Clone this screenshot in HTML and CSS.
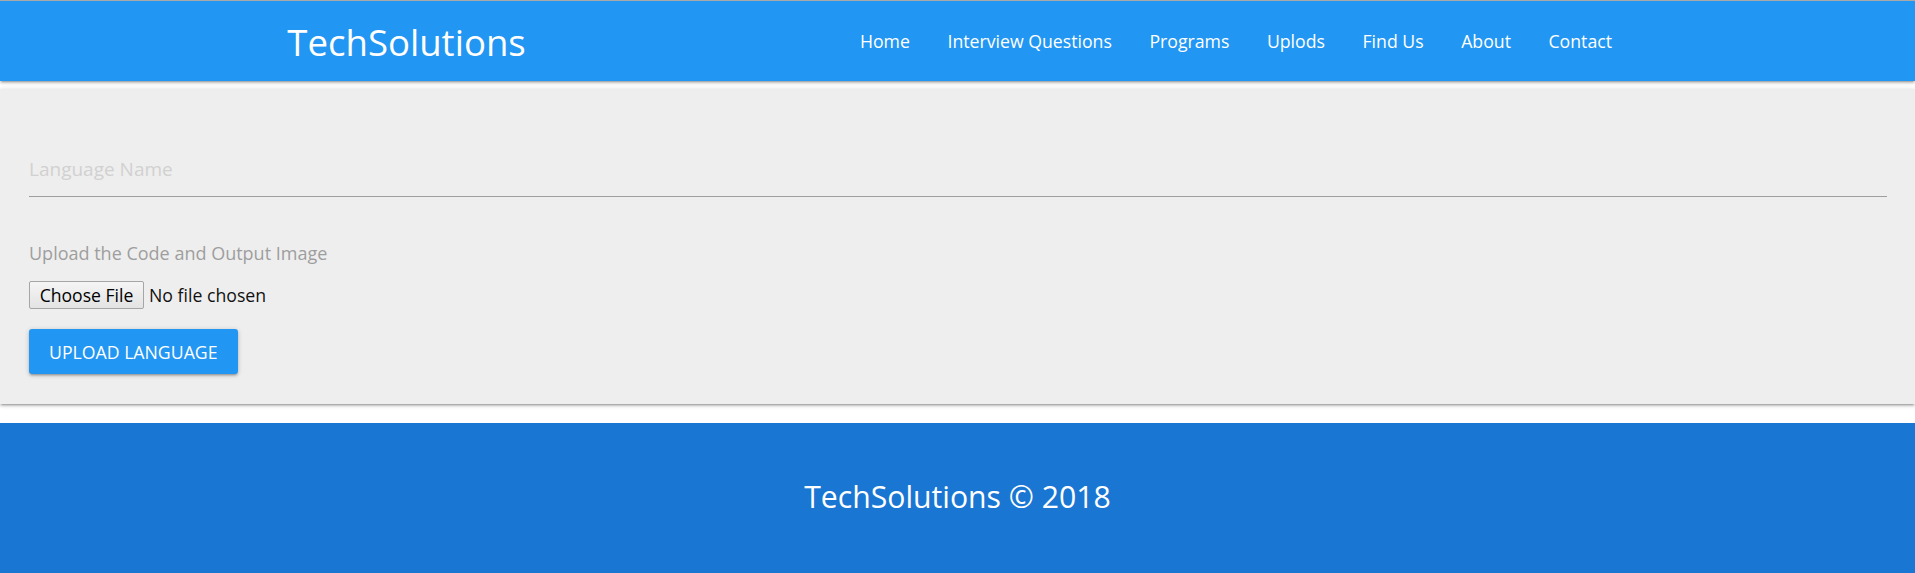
FILE: index.html
```html
<!DOCTYPE html>
<html lang="en">
<head>
<meta charset="utf-8">
<title>TechSolutions - Upload Language</title>
<link rel="stylesheet" href="styles.css">
</head>
<body>
<header class="navbar">
  <div class="container nav-inner">
    <a class="brand" href="#">TechSolutions</a>
    <ul class="nav-links">
      <li><a href="#">Home</a></li>
      <li><a href="#">Interview Questions</a></li>
      <li><a href="#">Programs</a></li>
      <li><a href="#">Uplods</a></li>
      <li><a href="#">Find Us</a></li>
      <li><a href="#">About</a></li>
      <li><a href="#">Contact</a></li>
    </ul>
  </div>
</header>

<main class="page">
  <form class="card" action="#">
    <input class="text-input" type="text" placeholder="Language Name">
    <p class="field-label">Upload the Code and Output Image</p>
    <label class="file-picker">
      <input class="file-hidden" type="file">
      <span class="file-btn">Choose File</span>
      <span class="file-status">No file chosen</span>
    </label>
    <div class="actions">
      <button class="btn" type="button">Upload Language</button>
    </div>
  </form>
</main>

<footer class="footer">
  <p class="footer-text">TechSolutions © 2018</p>
</footer>
</body>
</html>
```

FILE: styles.css
```css
* {
  box-sizing: border-box;
}

html, body {
  margin: 0;
  padding: 0;
}

body {
  background: #ffffff;
  font-family: "Open Sans", "Noto Sans", "DejaVu Sans", sans-serif;
  color: #222;
}

/* Header */
.navbar {
  border-top: 1px solid #a9a9a9;
  height: 81px;
  background: #2196f3;
  box-shadow: 0 2px 2px 0 rgba(0,0,0,0.14), 0 3px 1px -2px rgba(0,0,0,0.12), 0 1px 5px 0 rgba(0,0,0,0.2);
  position: relative;
  z-index: 2;
}

.container {
  width: 70%;
  margin: 0 auto;
}

.nav-inner {
  height: 80px;
  display: flex;
  align-items: center;
  justify-content: space-between;
}

.brand {
  color: #ffffff;
  text-decoration: none;
  font-size: 36.6px;
  line-height: 1;
  padding-top: 2px;
}

.nav-links {
  list-style: none;
  margin: 0 -3px 0 0;
  padding: 0;
  display: flex;
  align-items: center;
}

.nav-links a {
  display: block;
  color: #ffffff;
  text-decoration: none;
  font-size: 17.7px;
  padding: 0 18.75px;
  line-height: 80px;
}

/* Main card */
.page {
  padding-top: 8px;
}

.card {
  background: #eeeeee;
  padding: 48px 28px 30px 29px;
  margin: 0;
  box-shadow: 0 2px 2px 0 rgba(0,0,0,0.14), 0 3px 1px -2px rgba(0,0,0,0.12), 0 1px 5px 0 rgba(0,0,0,0.2);
  display: flex;
  flex-direction: column;
  align-items: flex-start;
}

.text-input {
  display: block;
  width: 100%;
  height: 60px;
  margin: 0;
  padding: 5px 0 0;
  border: none;
  border-bottom: 1px solid #9e9e9e;
  background: transparent;
  font-family: inherit;
  font-size: 19px;
  color: #333;
  outline: none;
}

.text-input::placeholder {
  color: #d1d1d1;
}

.field-label {
  margin: 42px 0 0;
  font-size: 18px;
  line-height: 28px;
  color: #9e9e9e;
}

.file-picker {
  margin-top: 14px;
  height: 28px;
  display: flex;
  align-items: center;
  cursor: pointer;
}

.file-hidden {
  display: none;
}

.file-btn {
  width: 115px;
  height: 28px;
  display: flex;
  align-items: center;
  justify-content: center;
  border: 1px solid #a6a6a6;
  border-radius: 2px;
  background: linear-gradient(#f5f5f5, #e3e3e3);
  font-size: 17.6px;
  color: #000;
}

.file-status {
  margin-left: 5px;
  font-size: 17.7px;
  color: #111;
}

.actions {
  margin-top: 20px;
}

.btn {
  height: 45px;
  padding: 0 20px;
  border: none;
  border-radius: 3px;
  background: #2196f3;
  color: #ffffff;
  font-family: inherit;
  font-size: 17.7px;
  text-transform: uppercase;
  box-shadow: 0 2px 2px 0 rgba(0,0,0,0.14), 0 3px 1px -2px rgba(0,0,0,0.12), 0 1px 5px 0 rgba(0,0,0,0.2);
  cursor: pointer;
}

/* Footer */
.footer {
  margin-top: 19px;
  height: 150px;
  background: #1976d2;
  display: flex;
  align-items: center;
  justify-content: center;
  padding-bottom: 4px;
}

.footer-text {
  margin: 0;
  color: #ffffff;
  font-size: 30.2px;
}
```
